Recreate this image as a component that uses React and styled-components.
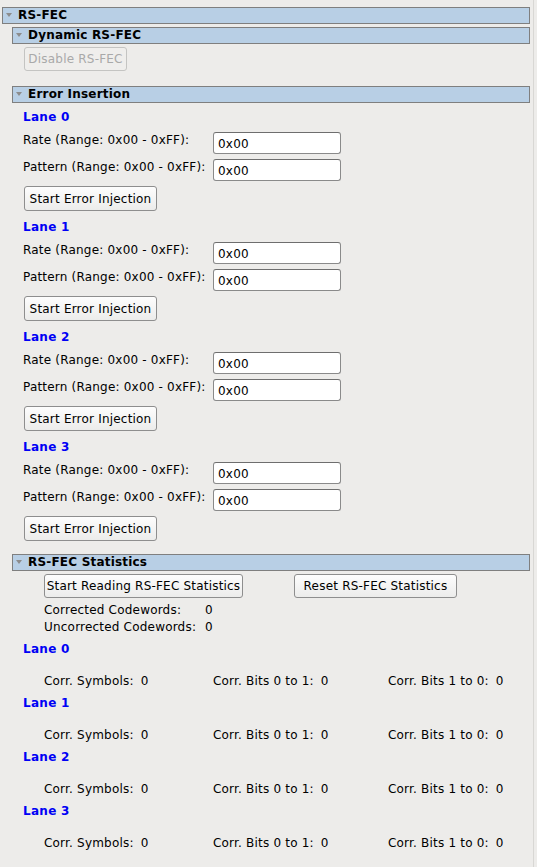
import styled, { createGlobalStyle } from "styled-components";

const GlobalStyle = createGlobalStyle`
  html, body {
    margin: 0;
    padding: 0;
    background: #edecea;
  }
  body {
    font-family: "DejaVu Sans", Verdana, sans-serif;
    font-size: 12px;
    letter-spacing: 0.2px;
    color: #000;
  }
`;

const Page = styled.div`
  box-sizing: border-box;
  width: 534px;
  min-height: 867px;
  padding: 7px 0 0 2px;
  border-right: 1px solid #d8d7d4;
  background: #edecea;
`;

const Panel = styled.div`
  width: 528px;
  display: flex;
  flex-direction: column;
`;

const Header = styled.div`
  box-sizing: border-box;
  height: 17px;
  margin-top: ${(p) => p.$top || 0}px;
  display: flex;
  align-items: center;
  gap: 6px;
  padding-left: 3px;
  background: #b8cfe5;
  border: 1px solid #7f7f7f;
  font-weight: bold;
  font-size: 12px;
  line-height: 15px;
`;

const Caret = styled.span`
  width: 0;
  height: 0;
  margin-top: -1px;
  border-left: 3px solid transparent;
  border-right: 3px solid transparent;
  border-top: 4px solid #8c8c8c;
`;

const Body = styled.div`
  display: flex;
  flex-direction: column;
  padding-left: ${(p) => p.$indent || 0}px;
`;

const Button = styled.button`
  box-sizing: border-box;
  width: ${(p) => p.$w}px;
  height: ${(p) => p.$h || 24}px;
  margin-top: ${(p) => p.$top || 0}px;
  margin-left: ${(p) => p.$left || 0}px;
  padding: 0;
  font-family: "DejaVu Sans", Verdana, sans-serif;
  font-size: 12px;
  letter-spacing: 0.2px;
  color: #000;
  background: linear-gradient(#fdfdfd, #ececeb);
  border: 1px solid #8e8e8e;
  border-radius: 3px;
  white-space: nowrap;

  &:disabled {
    color: #a9a9a9;
    background: #efeeec;
    border-color: #c4c4c2;
  }
`;

const LaneTitle = styled.div`
  margin-top: ${(p) => p.$top || 0}px;
  padding-left: ${(p) => p.$indent || 0}px;
  height: 16px;
  line-height: 16px;
  font-weight: bold;
  font-size: 12px;
  letter-spacing: 0.3px;
  color: #0000f5;
`;

const Lane = styled.div`
  display: flex;
  flex-direction: column;
  padding-left: 11px;
  margin-top: ${(p) => p.$top || 0}px;
`;

const FieldRow = styled.div`
  display: grid;
  grid-template-columns: 190px 128px;
  align-items: start;
  margin-top: ${(p) => p.$top || 0}px;
`;

const FieldLabel = styled.span`
  line-height: 16px;
  white-space: nowrap;
`;

const Input = styled.input`
  box-sizing: border-box;
  width: 128px;
  height: 22px;
  padding: 2px 4px 0;
  font-family: "DejaVu Sans", Verdana, sans-serif;
  font-size: 12px;
  letter-spacing: 0.2px;
  color: #000;
  background: #fff;
  border: 1px solid #8a8a8a;
  border-top-color: #6e6e6e;
  border-radius: 3px;
  outline: none;
`;

const ButtonBar = styled.div`
  display: flex;
  gap: 51px;
  margin-top: 3px;
  padding-left: 32px;
`;

const Totals = styled.div`
  display: grid;
  grid-template-columns: 161px auto;
  margin-top: 4px;
  padding-left: 32px;
  line-height: 17px;
`;

const StatRow = styled.div`
  display: grid;
  grid-template-columns: 169px 175px auto;
  margin-top: 16px;
  padding-left: 32px;
  line-height: 16px;
`;

const Stat = styled.span`
  display: flex;
  gap: 7px;
  white-space: nowrap;
`;

const lanes = [0, 1, 2, 3];

function LaneInjection({ lane, top }) {
  return (
    <Lane $top={top}>
      <LaneTitle>Lane {lane}</LaneTitle>
      <FieldRow $top={7}>
        <FieldLabel>Rate (Range: 0x00 - 0xFF):</FieldLabel>
        <Input defaultValue="0x00" />
      </FieldRow>
      <FieldRow $top={5}>
        <FieldLabel>Pattern (Range: 0x00 - 0xFF):</FieldLabel>
        <Input defaultValue="0x00" />
      </FieldRow>
      <Button $w={133} $h={25} $top={5} $left={1}>
        Start Error Injection
      </Button>
    </Lane>
  );
}

function LaneStats({ lane, top }) {
  return (
    <>
      <LaneTitle $top={top} $indent={11}>
        Lane {lane}
      </LaneTitle>
      <StatRow>
        <Stat>Corr. Symbols: <span>0</span></Stat>
        <Stat>Corr. Bits 0 to 1: <span>0</span></Stat>
        <Stat>Corr. Bits 1 to 0: <span>0</span></Stat>
      </StatRow>
    </>
  );
}

export default function App() {
  return (
    <>
      <GlobalStyle />
      <Page>
        <Panel>
          <Header>
            <Caret />
            RS-FEC
          </Header>
          <Body $indent={10}>
            <Header $top={3}>
              <Caret />
              Dynamic RS-FEC
            </Header>
            <Body $indent={12}>
              <Button $w={103} $top={3} disabled>
                Disable RS-FEC
              </Button>
            </Body>

            <Header $top={15}>
              <Caret />
              Error Insertion
            </Header>
            {lanes.map((l) => (
              <LaneInjection key={l} lane={l} top={l === 0 ? 6 : 8} />
            ))}

            <Header $top={13}>
              <Caret />
              RS-FEC Statistics
            </Header>
            <ButtonBar>
              <Button $w={199}>Start Reading RS-FEC Statistics</Button>
              <Button $w={163}>Reset RS-FEC Statistics</Button>
            </ButtonBar>
            <Totals>
              <span>Corrected Codewords:</span>
              <span>0</span>
              <span>Uncorrected Codewords:</span>
              <span>0</span>
            </Totals>
            {lanes.map((l) => (
              <LaneStats key={l} lane={l} top={l === 0 ? 5 : 6} />
            ))}
          </Body>
        </Panel>
      </Page>
    </>
  );
}
